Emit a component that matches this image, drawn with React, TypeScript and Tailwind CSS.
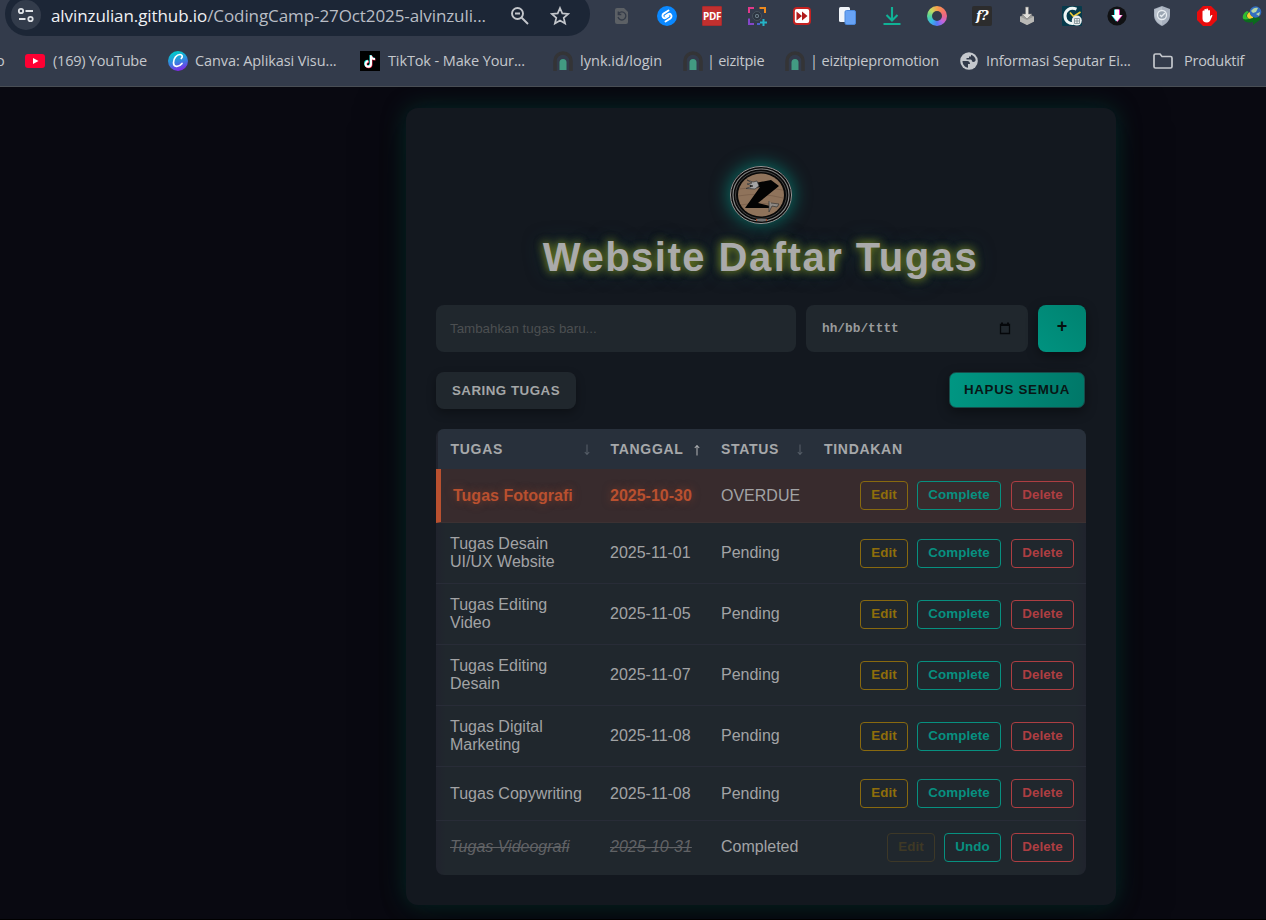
import React from "react";

type Kid = { children?: React.ReactNode };

const Ico = ({ children }: Kid) => (
  <svg viewBox="0 0 20 20" className="h-5 w-5 shrink-0">
    {children}
  </svg>
);

const Extensions = () => (
  <div className="ml-[22px] flex h-8 items-center gap-[25px]">
    <Ico>
      <path d="M5 2h7l4 4v10a2 2 0 0 1-2 2H5a2 2 0 0 1-2-2V4a2 2 0 0 1 2-2z" fill="#5c6065" />
      <path d="M6.7 7.5A4 4 0 1 1 6 11M6.3 5.5v3h3" fill="none" stroke="#343b48" strokeWidth="1.3" />
    </Ico>
    <Ico>
      <circle cx="10" cy="10" r="10" fill="#0a88ff" />
      <path d="M11.500 4.500 6.600 7.600a2.500 2.500 0 0 0-.5 3.700c.7.900 1.900 1 2.900.4l2.600-1.800M8.500 15.500l4.900-3.100a2.500 2.500 0 0 0 .5-3.700c-.7-.9-1.900-1-2.900-.4L8.400 10.100" fill="none" stroke="#fff" strokeWidth="1.900" strokeLinecap="round" />
    </Ico>
    <div className="flex h-5 w-5 shrink-0 items-center justify-center rounded-[1px] border border-[#a82b2e] bg-[#c2302f] font-['Open_Sans',sans-serif] text-[10px] font-bold tracking-[-0.4px] text-white">PDF</div>
    <Ico>
      <g fill="none" strokeWidth="2">
        <path d="M2 7V2h5" stroke="#e3398a" />
        <path d="M12.500 2h5.500v5" stroke="#ee8a1d" />
        <path d="M2 12.500V18h5" stroke="#8446c9" />
        <path d="M10 18h3" stroke="#4b63d0" />
        <path d="M16.500 13v7M13 16.500h7" stroke="#25b4c7" />
      </g>
      <circle cx="10" cy="10" r="4.500" fill="#2b3440" stroke="#47525c" />
      <circle cx="10" cy="10" r="2" fill="#778894" />
      <circle cx="10" cy="10" r="1" fill="#202830" />
    </Ico>
    <Ico>
      <rect x="1" y="1" width="18" height="18" rx="4" fill="#c52120" />
      <rect x="2.800" y="3" width="14.400" height="14" rx="2" fill="#fff" />
      <path d="M4.500 5.500 10 10l-5.500 4.500zM10 5.500 15.500 10 10 14.500z" fill="#b01b1c" />
    </Ico>
    <Ico>
      <rect x="2" y="1" width="11" height="15" rx="1.500" fill="#f0f4f9" />
      <rect x="8" y="4.500" width="10.500" height="14" rx="1.500" fill="#68a3f5" stroke="#4b88db" />
    </Ico>
    <Ico>
      <path d="M10 1v13M4.500 9l5.500 5.500L15.500 9M1.500 18h17" fill="none" stroke="#10b296" strokeWidth="2.100" />
    </Ico>
    <div className="flex h-5 w-5 shrink-0 items-center justify-center rounded-full bg-[conic-gradient(#f8a04b,#f77b62,#e96589,#c065df,#5377f7,#38bae6,#55d698,#c3dd62,#f8a04b)]">
      <div className="h-[10px] w-[10px] rounded-full bg-[#333b4b]" />
    </div>
    <div className="flex h-5 w-5 shrink-0 items-center justify-center rounded-[2px] bg-[#2c2c2d] font-['DejaVu_Serif',serif] text-[13px] font-bold tracking-[-0.5px] text-white italic">f?</div>
    <Ico>
      <path d="M3 10.500 10 7l7 3.500v5L10 19l-7-3.500z" fill="#9b9b99" />
      <path d="M3 10.500 10 14l7-3.500v5L10 19l-7-3.500z" fill="#b9b8b5" />
      <path d="M8.500 1h3v7H15l-5 5-5-5h3.500z" fill="#e1dfdb" stroke="#777" strokeWidth=".6" />
    </Ico>
    <Ico>
      <rect width="20" height="20" rx="1" fill="#073b4c" />
      <path d="M14.500 3.200C8 .5 3 4.500 3 10c0 5 4 8 8.500 7.500" fill="none" stroke="#eff6f5" strokeWidth="3" />
      <path d="m8 6.500 3.500 4 7-4.500" fill="none" stroke="#ebca36" strokeWidth="1.700" />
      <circle cx="14.800" cy="14.600" r="5" fill="#e9eeee" />
      <path d="M12.500 12.500h5v5h-5zM15 12.500v5M12.500 15h5" fill="none" stroke="#75868c" strokeWidth=".8" />
    </Ico>
    <Ico>
      <circle cx="10" cy="10" r="9.600" fill="#101113" />
      <path d="M7 3.500h4V9h3l-5 6.500L4.200 9H7z" fill="#31e4e5" />
      <path d="M9 3.500h4V9h2.800L10.500 16l-3-5z" fill="#ed28b5" />
      <path d="M8 3.500h4V9h3l-5 6.500L5 9h3z" fill="#fff" />
    </Ico>
    <Ico>
      <path d="M10 0 18 3v6c0 6-4 9-8 11-4-2-8-5-8-11V3z" fill="#a8b1bf" />
      <path d="M10 1v18c-4-2-7-5-7-10V3.500z" fill="#ced4dc" opacity=".45" />
      <circle cx="10" cy="9" r="4.500" fill="#9aa5b2" stroke="#e8edf2" strokeWidth="1.300" />
      <path d="m8 9 1.500 1.500L13 7" fill="none" stroke="#e8edf2" strokeWidth="1.400" />
    </Ico>
    <Ico>
      <path d="M6 0h8l6 6v8l-6 6H6l-6-6V6z" fill="#e90b0c" />
      <path d="M5.500 9V5.500a.9.900 0 0 1 1.800 0V4a.9.900 0 0 1 1.900 0v-.5a.9.900 0 0 1 1.900 0V5a.9.900 0 0 1 1.900 0v5.500l1-1.300c.8-.7 1.800 0 1.300.9L13.300 14.500c-.8 1.300-1.700 2-3.300 2C7 16.500 5.500 15 5.500 12.500z" fill="#fff" />
    </Ico>
    <Ico>
      <path d="M5 5C0 8-1 13 4 15l9 1 2-3-7 0C4 12 3 9 7 6z" fill="#2fbb30" />
      <path d="M8 6C4 8 4 12 8 13l7-1-5-2C8 9 8 8 10 6z" fill="#f4d12b" />
      <path d="M1 13c2 4 6 4 10 3v3l8-6-8-5v4c-4 1-7 2-10 1z" fill="#0b6b1d" />
      <circle cx="13.500" cy="6" r="5.800" fill="#326ebf" />
      <path d="M9 5c2-3 5-4 7-3l-2 4-3 1zM14 8l4-2-1 4z" fill="#b8d6a5" />
    </Ico>
  </div>
);

const LinkIcon = () => (
  <Ico>
    <path d="M2 20V10a8 8 0 0 1 16 0v10" fill="none" stroke="#343436" strokeWidth="3.500" />
    <path d="M6.500 19v-7.500a3.500 3.500 0 0 1 7 0V19z" fill="#429b82" />
  </Ico>
);

const Mark = ({ icon, text, box }: { icon: React.ReactNode; text: string; box: string }) => (
  <div className={"flex shrink-0 items-center whitespace-nowrap " + box}>
    {icon}
    <span>{text}</span>
  </div>
);

const Bookmarks = () => (
  <div className="flex h-[50px] items-center overflow-hidden font-['Open_Sans',sans-serif] text-[14.500px] text-[#c5c8cd]">
    <div className="-ml-1 w-[29px] shrink-0">o</div>
    <Mark box="w-[143px] gap-2 tracking-[-0.22px]" text="(169) YouTube" icon={<Ico><rect y="3" width="20" height="14" rx="3" fill="#ff0033" /><path d="m8 7 5.500 3L8 13z" fill="#fff" /></Ico>} />
    <Mark box="w-[192px] gap-[7px] tracking-[-0.1px]" text="Canva: Aplikasi Visu..." icon={<div className="flex h-5 w-5 shrink-0 items-center justify-center rounded-full bg-[linear-gradient(165deg,#05c5cd_15%,#397fe0_55%,#8326e9_90%)]"><svg viewBox="0 0 20 20" className="h-5 w-5"><path d="M13.300 7.500c2-2 .7-4-1.300-4-3.500 0-6.500 4-6.500 8.300 0 4.500 5 5 8.500.7" fill="none" stroke="#fff" strokeWidth="1.700" strokeLinecap="round" /></svg></div>} />
    <Mark box="w-[193px] gap-2 tracking-[-0.12px]" text="TikTok - Make Your..." icon={<Ico><rect width="20" height="20" fill="#000" /><g fill="none" strokeWidth="2"><path d="M10.500 4v8.500a2.700 2.700 0 1 1-2.700-2.700M10.500 4c0 2 1.500 3.500 4 3.600" stroke="#25f4ee" /><path d="M11.500 5v8.500a2.700 2.700 0 1 1-2.700-2.700M11.500 5c0 2 1.500 3.500 4 3.600" stroke="#fe2c55" /><path d="M11 4.500V13a2.700 2.700 0 1 1-2.700-2.700M11 4.500c0 2 1.500 3.500 4 3.600" stroke="#fff" /></g></Ico>} />
    <Mark box="w-[130px] gap-[7px] tracking-[0.02px]" text="lynk.id/login" icon={<LinkIcon />} />
    <Mark box="w-[102px] gap-[4px] tracking-[-0.25px]" text="| eizitpie" icon={<LinkIcon />} />
    <Mark box="w-[174px] gap-[5px] tracking-[-0.15px]" text="| eizitpiepromotion" icon={<LinkIcon />} />
    <Mark box="w-[194px] gap-[7px] tracking-[-0.15px]" text="Informasi Seputar Ei..." icon={<Ico><circle cx="10" cy="10" r="8.800" fill="#c5c8cd" /><path d="M3.500 10h4c3 0 3.500 1.500 3.500 3H9v3.700c-3-.3-5.500-3-5.500-6.700zM12 3.700c2.500.8 4.500 3 4.700 5.300-.5 2-2 2.500-3.700 1.500 0-2-1-2-3-2H7.500V7H10V5.500h2z" fill="#333b4b" /></Ico>} />
    <Mark box="gap-[11px] tracking-[-0.25px]" text="Produktif" icon={<Ico><path d="M1 4.500Q1 3 2.500 3H7l2 2.500h8.500Q19 5.500 19 7v8.500Q19 17 17.500 17h-15Q1 17 1 15.500z" fill="none" stroke="#c5c8cd" strokeWidth="1.700" /></Ico>} />
  </div>
);

const Chrome = () => (
  <header className="h-[87px] border-b border-[#494e55] bg-[#333b4b]">
    <div className="flex h-9 pl-[5px]">
      <div className="-mt-2 flex h-11 w-[585px] shrink-0 items-center rounded-full bg-[#1c2636] pt-2 pl-[6px]">
        <div className="-mt-[6px] flex h-[30px] w-[30px] shrink-0 items-center justify-center rounded-full bg-[#333c4b]">
          <svg viewBox="0 0 18 16" className="h-4 w-[18px]" fill="none" stroke="#dfe2e6" strokeWidth="1.800">
            <circle cx="4" cy="4" r="2.200" /><path d="M8.500 4H16M2 12h6.500" /><circle cx="13.500" cy="12" r="2.200" />
          </svg>
        </div>
        <div className="-mt-1 ml-[10px] w-[459px] font-['Open_Sans',sans-serif] text-[17px] tracking-[-0.09px] whitespace-nowrap text-[#b9bdc5]">
          <span className="text-[#f0f1f4]">alvinzulian.github.io</span>/CodingCamp-27Oct2025-alvinzuli...
        </div>
        <svg viewBox="0 0 20 20" className="-mt-[5px] h-5 w-5 shrink-0" fill="none" stroke="#c3c6cb" strokeWidth="1.900">
          <circle cx="7.500" cy="7.500" r="5.500" /><path d="m11.500 11.500 6.500 6.500M5 7.500h5" />
        </svg>
        <svg viewBox="0 0 20 20" className="-mt-[5px] ml-5 h-5 w-5 shrink-0" fill="none" stroke="#c3c6cb" strokeWidth="1.700">
          <path d="m10 2 2.300 5.400 5.900.5-4.500 3.900 1.400 5.700-5.100-3-5.100 3 1.400-5.700-4.500-3.900 5.900-.5z" />
        </svg>
      </div>
      <Extensions />
    </div>
    <Bookmarks />
  </header>
);

const Logo = () => (
  <div className="mt-[58px] flex h-[57px] w-[62px] items-center justify-center rounded-[50%] shadow-[0_0_17px_2px_rgba(0,160,140,0.6)]">
    <svg viewBox="0 0 62 58" className="h-[58px] w-[62px]">
      <ellipse cx="31" cy="29" rx="30.500" ry="28.500" fill="#080808" stroke="#989898" />
      <ellipse cx="31" cy="29" rx="28" ry="26" fill="none" stroke="#858585" strokeWidth="1.200" />
      <ellipse cx="31" cy="29" rx="25.500" ry="23.500" fill="none" stroke="#626262" strokeWidth=".7" />
      <ellipse cx="31" cy="29" rx="23" ry="21.500" fill="#8f735b" />
      <path d="M9 23q22-3 44 1M8 30q22-4 45 2M11 39q20-4 38 1" fill="none" stroke="#7a5f4b" strokeWidth=".8" />
      <path d="M20 18 41 14l8 6-21 17 12 3-1 2H15L30 21l-10 2z" fill="#030303" />
      <path d="m17 14 6 2 4-1 2 5-4 3-9-.5 7-2.500-6-2 5-1z" fill="#a5a5a5" stroke="#343434" strokeWidth=".7" />
      <path d="M39 35v11l3-6 5 1 2-3-8-1" fill="#8f8984" stroke="#343434" strokeWidth=".7" />
      <path d="M27 54h9" stroke="#707070" strokeWidth="2" /><path d="M26 54h1M36 54h1" stroke="#aa4a25" strokeWidth="2" />
    </svg>
  </div>
);

type ActionProps = { label: string; look: string };
const Action = ({ label, look }: ActionProps) => (
  <button className={"flex h-[29px] items-center justify-center rounded-[4px] border pb-px text-[13.330px] font-bold tracking-[0.1px] " + look}>{label}</button>
);

type Task = { name: string[]; date: string; status: string; height: string; kind?: "overdue" | "done" };
const tasks: Task[] = [
  { name: ["Tugas Fotografi"], date: "2025-10-30", status: "OVERDUE", height: "h-[54px]", kind: "overdue" },
  { name: ["Tugas Desain", "UI/UX Website"], date: "2025-11-01", status: "Pending", height: "h-[61px]" },
  { name: ["Tugas Editing", "Video"], date: "2025-11-05", status: "Pending", height: "h-[61px]" },
  { name: ["Tugas Editing", "Desain"], date: "2025-11-07", status: "Pending", height: "h-[61px]" },
  { name: ["Tugas Digital", "Marketing"], date: "2025-11-08", status: "Pending", height: "h-[61px]" },
  { name: ["Tugas Copywriting"], date: "2025-11-08", status: "Pending", height: "h-[54px]" },
  { name: ["Tugas Videografi"], date: "2025-10-31", status: "Completed", height: "h-[54px]", kind: "done" },
];

const Row = ({ task }: { task: Task }) => {
  const late = task.kind === "overdue";
  const done = task.kind === "done";
  const lift = task.name.length > 1 || done ? " pb-px" : " pt-px";
  const tone = late
    ? "font-bold text-[#b9502f] [text-shadow:0_0_8px_rgba(185,80,47,0.5)]"
    : done
      ? "italic line-through text-[#606265]"
      : "";
  return (
    <div className={"flex items-center pr-3 text-[16px] leading-[18px] text-[#a2a3a5] " + task.height + (late ? " border-b border-b-[#3c3132] border-l-[5px] border-l-[#b9502f] bg-[#382b2d]" : done ? " border-b border-transparent pl-[14px]" : " border-b border-[#282c37] pl-[14px]")}>
      <div className={"shrink-0 " + tone + lift + (late ? " w-[157px] pl-3" : " w-[160px]")}>
        {task.name.map((line) => <div key={line} className="whitespace-nowrap">{line}</div>)}
      </div>
      <div className={"w-[111px] shrink-0 whitespace-nowrap " + tone + lift + (late ? " ml-3 -translate-x-0" : "")}>{task.date}</div>
      <div className={"w-[90px] shrink-0 whitespace-nowrap" + lift}>{task.status}</div>
      <div className="flex flex-1 justify-end">
        <Action label="Edit" look={"mr-[9px] w-12 " + (done ? "border-[#3d3827] text-[#3f3925]" : "border-[#88690f] text-[#8f6e0b]")} />
        <Action label={done ? "Undo" : "Complete"} look={"mr-[10px] border-[#079080] text-[#079080] " + (done ? "w-[57px]" : "w-[84px]")} />
        <Action label="Delete" look="w-[63px] border-[#ad3e42] text-[#ad3e42]" />
      </div>
    </div>
  );
};

const Arrow = ({ up }: { up?: boolean }) => (
  <svg viewBox="0 0 8 12" className={up ? "mt-px h-3 w-2 text-[#a9abae]" : "mt-px h-3 w-2 text-[#555d67]"} fill="none" stroke="currentColor">
    <path d={up ? "M4 11.500V1.500M1.800 4 4 1.500l2.200 2.500" : "M4 .5v10M1.800 8 4 10.500 6.200 8"} strokeWidth="1.100" />
  </svg>
);

export default function App() {
  return (
    <div className="flex h-[920px] w-[1266px] flex-col overflow-hidden bg-[#090911] font-['Liberation_Sans',Arial,sans-serif]">
      <Chrome />
      <div className="flex flex-1 justify-center overflow-hidden border-b border-black bg-[#090911] pl-[256px]">
        <main className="mt-[21px] mr-[150px] ml-[150px] flex h-[797px] w-[710px] shrink-0 flex-col items-center rounded-[12px] bg-[#13181f] px-[30px] shadow-[0_0_24px_rgba(0,90,78,0.42),0_10px_50px_rgba(0,0,0,0.5)]">
          <Logo />
          <h1 className="mt-[10px] h-12 pr-px text-[40px] leading-[48px] font-bold tracking-[1.500px] whitespace-nowrap text-[#aaaaaa] [text-shadow:0_0_8px_#6b7a22,0_0_10px_#48571e,0_0_20px_#153c40]">Website Daftar Tugas</h1>
          <div className="mt-6 flex w-full gap-[10px]">
            <div className="flex h-[47px] w-[360px] items-center rounded-lg bg-[#20272d] pl-[14px] text-[13.330px] text-[#4c4f51]">Tambahkan tugas baru...</div>
            <div className="flex h-[47px] w-[222px] items-center justify-between rounded-lg bg-[#20272d] pr-[17px] pl-4 font-['Liberation_Mono',monospace] text-[12.800px] font-bold text-[#999b9c]">
              <span>hh/bb/tttt</span>
              <svg viewBox="0 0 12 13" className="h-[13px] w-3"><path d="M1.500 2.500h9v9h-9z" fill="none" stroke="#05070a" strokeWidth="1.300" /><path d="M1 3h10M3 .5v2M9 .5v2" stroke="#05070a" strokeWidth="2" /></svg>
            </div>
            <button className="flex h-[47px] w-12 items-center justify-center rounded-lg bg-[linear-gradient(45deg,#009380,#008270)] pb-[5px] text-[18px] font-bold text-[#06100f] shadow-[0_4px_12px_rgba(0,0,0,0.4)]">+</button>
          </div>
          <div className="mt-5 flex h-[37px] w-full items-center justify-between text-[13.330px] font-bold">
            <button className="h-[37px] w-[140px] rounded-lg bg-[#20272d] tracking-[0.500px] text-[#a4a6a7] shadow-[0_4px_10px_rgba(0,0,0,0.3)]">SARING TUGAS</button>
            <button className="mr-px mb-px h-[36px] w-[136px] rounded-[7px] border border-[#174b49] bg-[linear-gradient(100deg,#009783,#007768)] tracking-[0.700px] text-[#081716] shadow-[0_4px_12px_rgba(0,0,0,0.4)]">HAPUS SEMUA</button>
          </div>
          <section className="mt-5 w-full overflow-hidden rounded-lg bg-[#20272d] bg-[linear-gradient(90deg,#20232d_0px,transparent_10px,transparent_640px,#20232d_650px)]">
            <div className="ml-[2px] flex h-10 items-center rounded-tl-[5px] bg-[#28303b] pl-[12.500px] text-[14px] font-bold tracking-[0.700px] text-[#a6a8aa]">
              <div className="flex w-[160px] items-center pt-px"><span className="w-[132px]">TUGAS</span><Arrow /></div>
              <div className="flex w-[110.500px] items-center pt-px"><span className="w-[82px]">TANGGAL</span><Arrow up /></div>
              <div className="flex w-[103px] items-center pt-px"><span className="w-[75px]">STATUS</span><Arrow /></div>
              <span className="pt-px">TINDAKAN</span>
            </div>
            {tasks.map((task) => <Row key={task.name.join(" ")} task={task} />)}
          </section>
        </main>
      </div>
    </div>
  );
}
